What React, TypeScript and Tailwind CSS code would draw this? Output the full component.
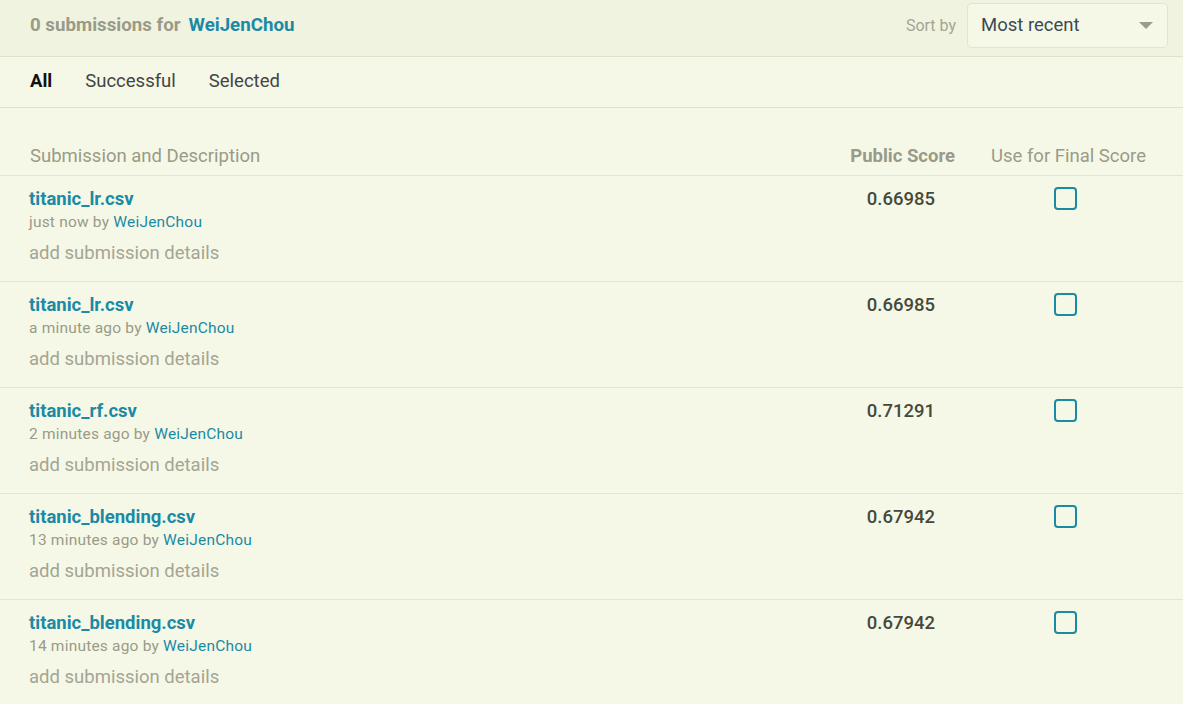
const rows = [
  { name: "titanic_lr.csv", when: "just now", score: "0.66985" },
  { name: "titanic_lr.csv", when: "a minute ago", score: "0.66985" },
  { name: "titanic_rf.csv", when: "2 minutes ago", score: "0.71291" },
  { name: "titanic_blending.csv", when: "13 minutes ago", score: "0.67942" },
  { name: "titanic_blending.csv", when: "14 minutes ago", score: "0.67942" },
];

export default function App() {
  return (
    <div
      className="min-h-[704px] w-[1183px] bg-[#f6f8e7] text-[#999b88]"
      style={{ fontFamily: "Roboto, 'Liberation Sans', sans-serif" }}
    >
      {/* Header */}
      <div className="flex h-[57px] items-center justify-between border-b border-[#dfe1cf] bg-[#f1f3e1] pb-[5px] pl-[30px] pr-[15px]">
        <div className="flex items-center gap-[8px] text-[18.7px] font-bold">
          <span>0 submissions for</span>
          <span className="text-[#1a8aa5]">WeiJenChou</span>
        </div>
        <div className="flex items-center gap-[11px]">
          <span className="text-[16px] text-[#a3a594]">Sort by</span>
          <div className="flex h-[45px] w-[201px] items-center justify-between rounded-[4px] border border-[#e2e4d2] bg-[#f6f8e7] pl-[13px] pr-[14px]">
            <span className="text-[18.5px] text-[#3b4a52]">Most recent</span>
            <svg width="14" height="8" viewBox="0 0 14 8">
              <path d="M0 0 L14 0 L7 7 Z" fill="#9a9c8a" />
            </svg>
          </div>
        </div>
      </div>

      {/* Tabs */}
      <div className="flex h-[51px] items-center gap-[33px] border-b border-[#dfe1cf] pl-[30px] text-[18.5px] text-[#444]">
        <span className="font-bold text-[#111]">All</span>
        <span>Successful</span>
        <span>Selected</span>
      </div>

      {/* Table header */}
      <div className="mt-[28px] flex h-[40px] items-center border-b border-[#e3e5d3] pt-[2px] text-[18.5px]">
        <div className="flex-1 pl-[30px]">Submission and Description</div>
        <div className="w-[160px] text-right font-bold">Public Score</div>
        <div className="w-[228px] pl-[36px]">Use for Final Score</div>
      </div>

      {rows.map((r, i) => (
        <div key={i} className="flex h-[106px] border-b border-[#e3e5d3]">
          <div className="flex-1 pl-[29px] pt-[12px]">
            <div className="text-[18.5px] font-bold leading-[22px] text-[#1a8aa5]">{r.name}</div>
            <div className="text-[15.5px] leading-[24px] tracking-[0.2px]">
              {r.when} by <span className="text-[#1a8aa5]">WeiJenChou</span>
            </div>
            <div className="mt-[8px] text-[18.5px] leading-[22px] text-[#a3a594]">add submission details</div>
          </div>
          <div className="w-[160px] pr-[20px] pt-[12px] text-right text-[18.5px] font-medium leading-[22px] text-[#45493c]">
            {r.score}
          </div>
          <div className="w-[228px] pl-[99px] pt-[11px]">
            <div className="h-[23px] w-[23px] rounded-[4px] border-2 border-[#1a8aa5]" />
          </div>
        </div>
      ))}
    </div>
  );
}
